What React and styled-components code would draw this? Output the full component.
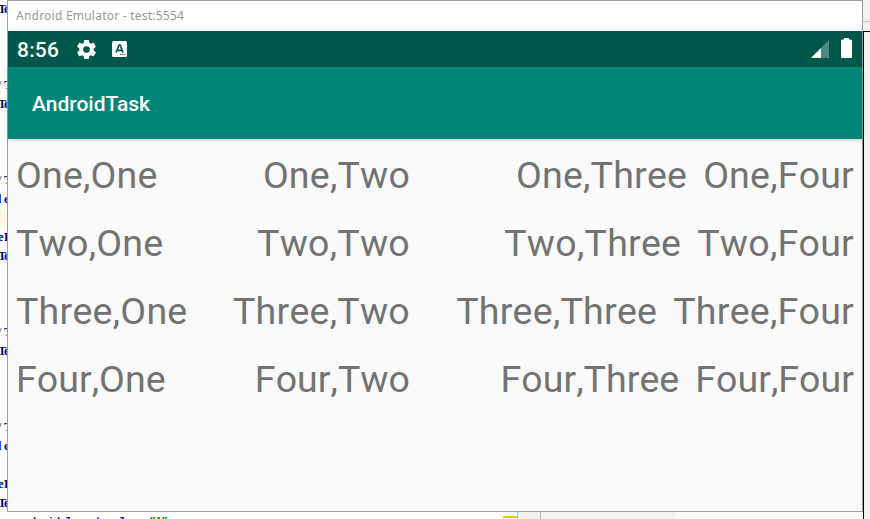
import React from "react";
import styled, { createGlobalStyle } from "styled-components";

const GlobalStyle = createGlobalStyle`
  * { box-sizing: border-box; }
  body { margin: 0; overflow: hidden; }
`;

const Desktop = styled.div`
  position: relative;
  width: 870px;
  height: 519px;
  overflow: hidden;
  background: #fff;
  display: flex;
  flex-direction: column;
`;

const Workspace = styled.div`
  display: flex;
  height: 512px;
  justify-content: space-between;
`;

const Editor = styled.div`
  width: 8px;
  flex: none;
`;

const CodeLine = styled.div`
  height: 19px;
  display: flex;
  overflow: hidden;
  background: ${(p) => (p.$active ? "#fffae3" : "transparent")};
  font: bold 12.5px/19px "Liberation Serif", serif;
  color: #000080;
  white-space: pre;
`;

const Glyph = styled.span`
  width: 6px;
  flex: none;
  color: ${(p) => (p.$plain ? "#222" : "inherit")};
  font-weight: ${(p) => (p.$plain ? "normal" : "bold")};

  &:first-child {
    margin-left: -2px;
  }
`;

const SidePanel = styled.div`
  width: 8px;
  background: #f0f0f0;
  display: flex;
  flex-direction: column;
`;

const SideHeader = styled.div`
  height: 31px;
  padding-top: 21px;

  &::after {
    content: "";
    display: block;
    height: 1px;
    background: #c4c4c4;
  }
`;

const SideBody = styled.div`
  flex: 1;
  margin-left: 1px;
  border-left: 1px solid #000;
  border-top: 1px solid #000;
`;

const BottomStrip = styled.div`
  height: 7px;
  display: flex;
  overflow: hidden;
`;

const BottomCode = styled.div`
  width: 503px;
  padding: 2px 0 0 17px;
  font: 12px/19px "Liberation Mono", monospace;
  letter-spacing: -1.2px;
  white-space: pre;
`;

const Token = styled.span`
  color: ${(p) => p.$color};
  font-weight: bold;
`;

const Marker = styled.div`
  width: 14px;
  height: 2px;
  margin-top: 4px;
  background: #ebc700;
`;

const Strip = styled.div`
  width: ${(p) => p.$w}px;
  background: ${(p) => p.$bg};
  border-left: ${(p) => (p.$line ? `1px solid ${p.$line}` : "none")};
`;

const EmulatorWindow = styled.main`
  position: absolute;
  left: 7px;
  top: 0;
  width: 856px;
  height: 512px;
  border: 1px solid #a0a0a0;
  background: #fafafa;
  display: flex;
  flex-direction: column;
`;

const TitleBar = styled.div`
  height: 30px;
  flex: none;
  background: #fff;
  padding-left: 8px;
  font: 12px/30px "Noto Sans", sans-serif;
  letter-spacing: 0.23px;
  color: #999;
`;

const StatusBar = styled.div`
  height: 36px;
  flex: none;
  background: #00574b;
  color: #fff;
  display: flex;
  align-items: center;
  padding: 0 10px 0 9px;
`;

const Clock = styled.span`
  font: 500 21px/36px Roboto, sans-serif;
  letter-spacing: 0.2px;
  width: 58px;
  padding-top: 1px;
`;

const Icon = styled.svg`
  display: block;
  flex: none;
  margin-left: ${(p) => p.$ml || 0}px;
`;

const Spacer = styled.div`
  flex: 1;
`;

const AppBar = styled.header`
  height: 72px;
  flex: none;
  background: #008577;
  color: #fff;
  padding-left: 24px;
  font: 500 21px/74px Roboto, sans-serif;
  box-shadow: 0 1px 4px rgba(0, 0, 0, 0.2);
`;

const Table = styled.section`
  display: flex;
  flex-direction: column;
  padding-top: 2px;
`;

const Row = styled.div`
  height: 68px;
  display: flex;
  justify-content: space-between;
  padding: 0 8px;
  font: 37.5px/69px Roboto, sans-serif;
  font-kerning: none;
  letter-spacing: ${(p) => p.$tracking}px;
  color: #737373;
  white-space: nowrap;
`;

const LeftCells = styled.div`
  width: 394px;
  display: flex;
  justify-content: space-between;
`;

const RightCells = styled.div`
  display: flex;
  gap: 16px;
`;

const CODE = [
  "Te", "", "", "", "/T", "Te", "", "", "", "/T", "le", "*", "eR", "Te",
  "", "", "", "/T", "Te", "", "", "", "/T", "le", "", "eR", "Te",
];

const ROWS = [
  { name: "One", tracking: 0.2 },
  { name: "Two", tracking: 0.24 },
  { name: "Three", tracking: 0.24 },
  { name: "Four", tracking: 0.04 },
];

export default function App() {
  return (
    <>
      <GlobalStyle />
      <Desktop>
        <Workspace>
          <Editor>
            {CODE.map((text, i) => (
              <CodeLine key={i} $active={text === "*"}>
                {text !== "*" &&
                  [...text].map((c, j) => (
                    <Glyph key={j} $plain={c === "/"}>{c}</Glyph>
                  ))}
              </CodeLine>
            ))}
          </Editor>
          <SidePanel>
            <SideHeader />
            <SideBody />
          </SidePanel>
        </Workspace>
        <BottomStrip>
          <BottomCode>
            <Token $color="#660e7a">android</Token>
            <Token $color="#0000ff">:layout_column=</Token>
            <Token $color="#008000">"1"</Token>
          </BottomCode>
          <Marker />
          <Strip $w={23} $bg="#f0f0f0" $line="#b4b4b4" />
          <Strip $w={135} $bg="#f3f3f3" $line="#b4b4b4" />
          <Strip $w={188} $bg="#fafafa" />
          <Strip $w={7} $bg="#f0f0f0" $line="#000" />
        </BottomStrip>
        <EmulatorWindow>
          <TitleBar>Android Emulator - test:5554</TitleBar>
          <StatusBar>
            <Clock>8:56</Clock>
            <Icon width="23" height="23" viewBox="0 0 24 24" fill="#fff">
              <path d="M19.43 12.98c.04-.32.07-.64.07-.98s-.03-.66-.07-.98l2.11-1.65c.19-.15.24-.42.12-.64l-2-3.46c-.12-.22-.39-.3-.61-.22l-2.49 1c-.52-.4-1.08-.73-1.69-.98l-.38-2.65A.49.49 0 0 0 14 2h-4c-.25 0-.46.18-.49.42l-.38 2.65c-.61.25-1.17.59-1.69.98l-2.49-1c-.23-.09-.49 0-.61.22l-2 3.46c-.13.22-.07.49.12.64l2.11 1.65c-.04.32-.07.65-.07.98s.03.66.07.98l-2.11 1.65c-.19.15-.24.42-.12.64l2 3.46c.12.22.39.3.61.22l2.49-1c.52.4 1.08.73 1.69.98l.38 2.65c.03.24.24.42.49.42h4c.25 0 .46-.18.49-.42l.38-2.65c.61-.25 1.17-.59 1.69-.98l2.49 1c.23.09.49 0 .61-.22l2-3.46c.12-.22.07-.49-.12-.64l-2.11-1.65zM12 15.5a3.5 3.5 0 1 1 0-7 3.5 3.5 0 0 1 0 7z" />
            </Icon>
            <Icon width="15" height="16" viewBox="0 0 15 16" $ml={14}>
              <rect width="15" height="16" rx="1.5" fill="#fff" />
              <path d="M4 11.5 7.1 4h1L11 11.5M5.2 9.3h4.6" fill="none" stroke="#00574b" strokeWidth="1.7" />
              <path d="M8 13.5h1.2M10.2 13.5h1.2M12.4 13.5h1.2" stroke="#00574b" strokeWidth="1.2" />
            </Icon>
            <Spacer />
            <Icon width="18" height="18" viewBox="0 0 18 18">
              <path d="M18 0v18H0z" fill="#fff" fillOpacity=".3" />
              <path d="M10 8v10H0z" fill="#fff" />
            </Icon>
            <Icon width="11" height="22" viewBox="0 0 11 22" $ml={12}>
              <path d="M3 0h5v1.6h1.7Q11 1.8 11 3v15.5Q11 20 9.7 20H1.3Q0 20 0 18.5V3q0-1.2 1.3-1.4H3z" fill="#fff" />
            </Icon>
          </StatusBar>
          <AppBar>AndroidTask</AppBar>
          <Table>
            {ROWS.map(({ name, tracking }) => (
              <Row key={name} $tracking={tracking}>
                <LeftCells>
                  <span>{name},One</span>
                  <span>{name},Two</span>
                </LeftCells>
                <RightCells>
                  <span>{name},Three</span>
                  <span>{name},Four</span>
                </RightCells>
              </Row>
            ))}
          </Table>
        </EmulatorWindow>
      </Desktop>
    </>
  );
}
